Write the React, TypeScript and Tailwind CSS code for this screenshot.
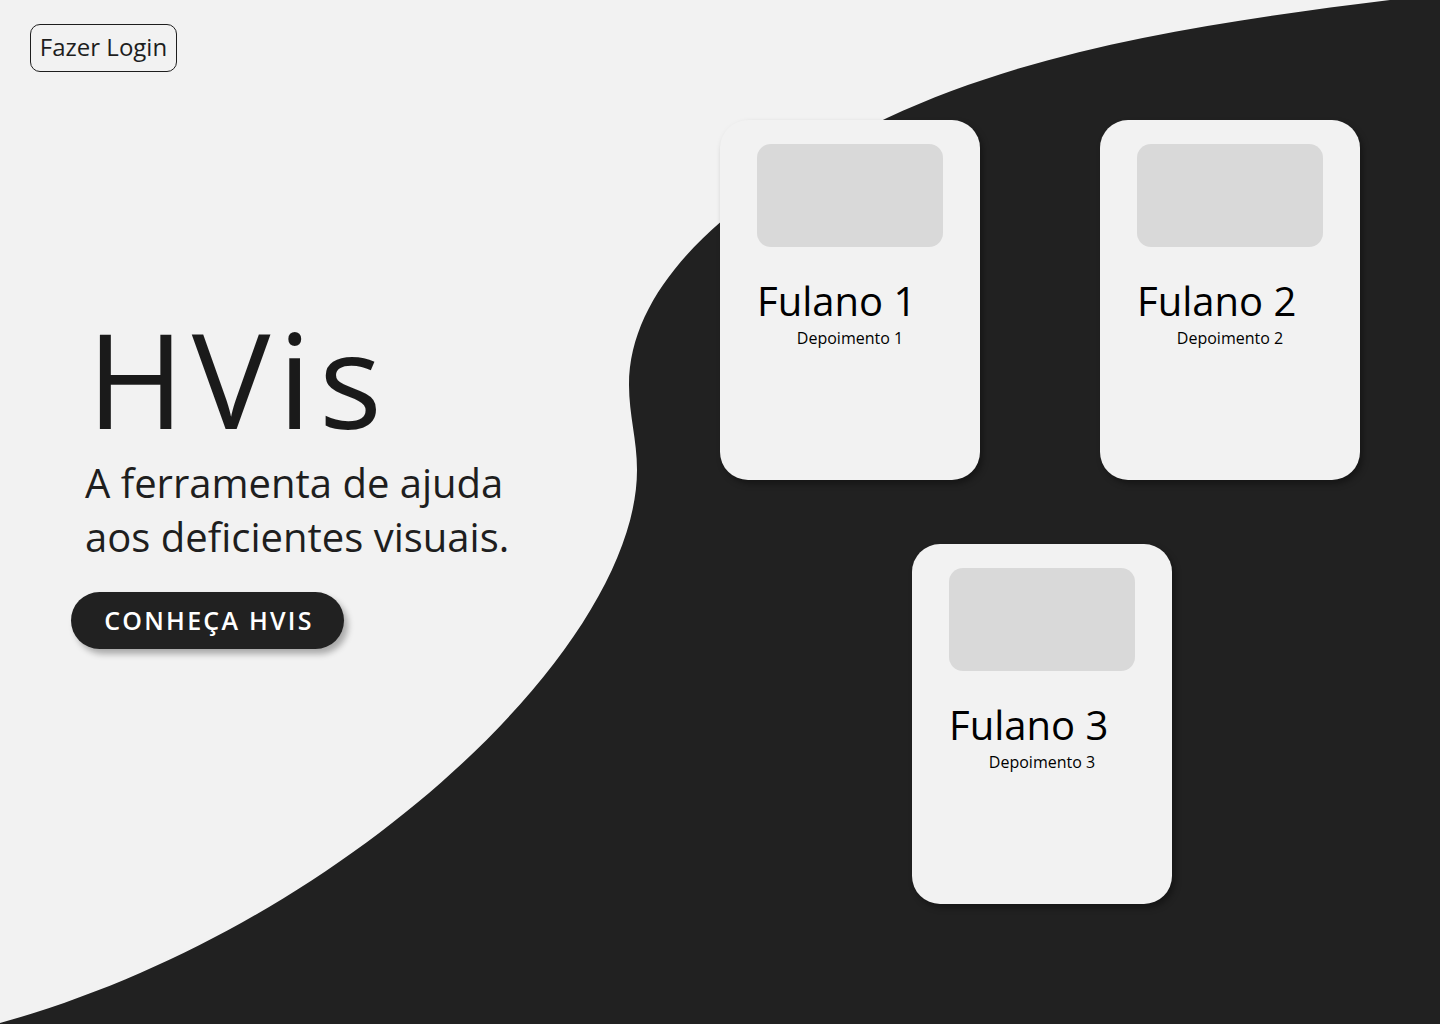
import React from "react";

const CURVE =
  "M1390,0 C1221,21 1041,46 887,118 C751,182 629,275 629,385 C629,415 637,440 637,470 C637,650 337,930 0,1023 L0,1024 L1440,1024 L1440,0 Z";

function Card({ n }: { n: number }) {
  return (
    <div className="w-[260px] h-[360px] rounded-[28px] bg-[#f2f2f2] shadow-[3px_4px_6px_rgba(0,0,0,0.35)] pt-[24px] px-[37px] flex flex-col">
      <div className="w-[186px] h-[103px] rounded-[14px] bg-[#d9d9d9]" />
      <div className="mt-[27px] text-[40px] leading-[54px] text-black font-['Open_Sans',sans-serif]">
        Fulano {n}
      </div>
      <div className="text-center text-[16px] leading-[20px] text-black font-['Open_Sans',sans-serif]">
        Depoimento {n}
      </div>
    </div>
  );
}

export default function App() {
  return (
    <div className="relative w-full h-[1024px] overflow-hidden bg-[#f2f2f2] font-['Open_Sans',sans-serif]">
      <svg
        className="absolute inset-0"
        width="1440"
        height="1024"
        viewBox="0 0 1440 1024"
      >
        <path d={CURVE} fill="#212121" />
      </svg>
      <div className="relative flex flex-col">
        <div className="pt-[24px] pl-[30px]">
          <button className="h-[48px] w-[147px] rounded-[10px] border border-[#1e1e1e] text-[24px] leading-[32px] text-[#1e1e1e] flex items-center justify-center pb-[2px]">
            Fazer Login
          </button>
        </div>
        <div className="mt-[48px] flex">
          <div className="w-[720px] pl-[71px] pt-[192px] flex flex-col items-start">
            <h1 className="ml-[16px] text-[132px] leading-[132px] font-normal tracking-[0.057em] text-[#1a1a1a]">
              HVis
            </h1>
            <p className="ml-[14px] mt-[12px] text-[40px] leading-[54px] text-[#1e1e1e]">
              A ferramenta de ajuda
              <br />
              aos deficientes visuais.
            </p>
            <button className="mt-[28px] h-[57px] w-[273px] rounded-full bg-[#212121] text-white text-[25px] font-semibold tracking-[0.09em] pl-[3px] shadow-[4px_5px_6px_rgba(0,0,0,0.3)] font-['Open_Sans',sans-serif]">
              CONHEÇA HVIS
            </button>
          </div>
          <div className="flex flex-col gap-[64px]">
            <div className="flex gap-[120px]">
              <Card n={1} />
              <Card n={2} />
            </div>
            <div className="pl-[192px]">
              <Card n={3} />
            </div>
          </div>
        </div>
      </div>
    </div>
  );
}
